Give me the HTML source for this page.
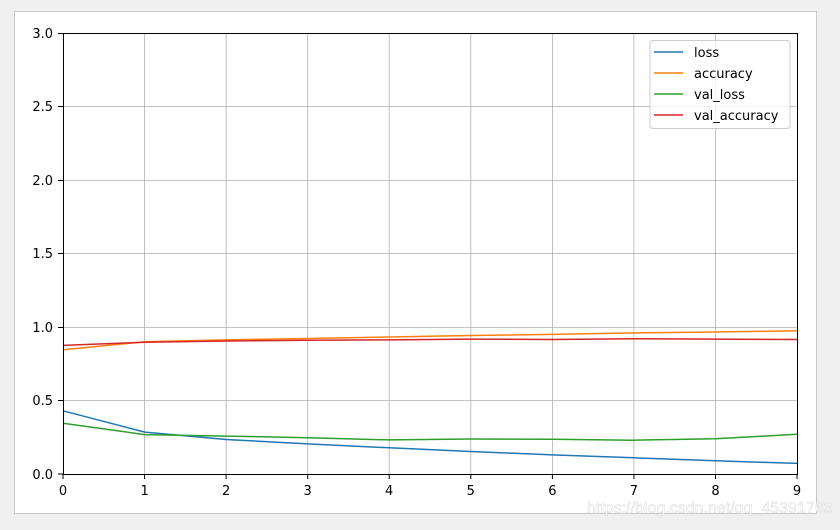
<!DOCTYPE html>
<html><head><style>body{margin:0;background:#f0f0f0;width:840px;height:525px;overflow:hidden}</style></head><body>
<svg width="840" height="525" xmlns="http://www.w3.org/2000/svg" font-family="DejaVu Sans, sans-serif" font-size="13">
<rect x="14.5" y="11.5" width="802" height="502" fill="#fff" stroke="#c8c8c8"/>
<g stroke="#b0b0b0" stroke-width="0.8">
<line x1="144.6" y1="33" x2="144.6" y2="474"/><line x1="226.1" y1="33" x2="226.1" y2="474"/><line x1="307.7" y1="33" x2="307.7" y2="474"/><line x1="389.2" y1="33" x2="389.2" y2="474"/><line x1="470.8" y1="33" x2="470.8" y2="474"/><line x1="552.4" y1="33" x2="552.4" y2="474"/><line x1="633.9" y1="33" x2="633.9" y2="474"/><line x1="715.5" y1="33" x2="715.5" y2="474"/>
<line x1="63" y1="400.5" x2="797" y2="400.5"/><line x1="63" y1="327.5" x2="797" y2="327.5"/><line x1="63" y1="253.5" x2="797" y2="253.5"/><line x1="63" y1="180.5" x2="797" y2="180.5"/><line x1="63" y1="106.5" x2="797" y2="106.5"/>
</g>
<g fill="none" stroke-width="1.5">
<polyline stroke="#1f77b4" points="63,410.8 144.6,432.1 226.1,439.5 307.7,443.9 389.2,447.8 470.8,451.5 552.4,454.9 633.9,457.8 715.5,460.8 797,463.4"/>
<polyline stroke="#ff7f0e" points="63,349.8 144.6,341.7 226.1,339.9 307.7,338.5 389.2,337 470.8,335.5 552.4,334.4 633.9,332.9 715.5,332 797,330.8"/>
<polyline stroke="#2ca02c" points="63,423.3 144.6,434.6 226.1,436.1 307.7,437.7 389.2,439.9 470.8,439 552.4,439.2 633.9,440.2 715.5,438.7 797,434.3"/>
<polyline stroke="#d62728" points="63,345.4 144.6,342.3 226.1,341 307.7,340.2 389.2,339.9 470.8,339.1 552.4,339.5 633.9,338.8 715.5,339.1 797,339.5"/>
</g>
<rect x="63.5" y="33.5" width="734" height="441" fill="none" stroke="#000" stroke-width="1"/>
<g stroke="#000"><line x1="63" y1="474" x2="63" y2="479"/><line x1="144.6" y1="474" x2="144.6" y2="479"/><line x1="226.1" y1="474" x2="226.1" y2="479"/><line x1="307.7" y1="474" x2="307.7" y2="479"/><line x1="389.2" y1="474" x2="389.2" y2="479"/><line x1="470.8" y1="474" x2="470.8" y2="479"/><line x1="552.4" y1="474" x2="552.4" y2="479"/><line x1="633.9" y1="474" x2="633.9" y2="479"/><line x1="715.5" y1="474" x2="715.5" y2="479"/><line x1="797" y1="474" x2="797" y2="479"/>
<line x1="58" y1="474" x2="63" y2="474"/><line x1="58" y1="400.5" x2="63" y2="400.5"/><line x1="58" y1="327.5" x2="63" y2="327.5"/><line x1="58" y1="253.5" x2="63" y2="253.5"/><line x1="58" y1="180.5" x2="63" y2="180.5"/><line x1="58" y1="106.5" x2="63" y2="106.5"/><line x1="58" y1="33.5" x2="63" y2="33.5"/></g>
<g text-anchor="middle"><text x="63" y="495">0</text><text x="144.6" y="495">1</text><text x="226.1" y="495">2</text><text x="307.7" y="495">3</text><text x="389.2" y="495">4</text><text x="470.8" y="495">5</text><text x="552.4" y="495">6</text><text x="633.9" y="495">7</text><text x="715.5" y="495">8</text><text x="797" y="495">9</text></g>
<g text-anchor="end"><text x="53" y="479">0.0</text><text x="53" y="405">0.5</text><text x="53" y="332">1.0</text><text x="53" y="258">1.5</text><text x="53" y="185">2.0</text><text x="53" y="111">2.5</text><text x="53" y="38">3.0</text></g>
<rect x="650" y="40.5" width="140" height="88" rx="3" fill="#fff" fill-opacity="0.8" stroke="#ccc"/>
<g stroke-width="1.5"><line x1="654" y1="52" x2="683" y2="52" stroke="#1f77b4"/><line x1="654" y1="73" x2="683" y2="73" stroke="#ff7f0e"/><line x1="654" y1="94" x2="683" y2="94" stroke="#2ca02c"/><line x1="654" y1="115" x2="683" y2="115" stroke="#d62728"/></g>
<text x="694" y="57">loss</text><text x="694" y="78">accuracy</text><text x="694" y="99">val_loss</text><text x="694" y="120">val_accuracy</text>
<text x="587" y="513" font-family="Liberation Sans, sans-serif" font-size="16" fill="#fff" stroke="#ddd" stroke-width="0.6" opacity="0.9">https://blog.csdn.net/qq_45391763</text>
</svg>
</body></html>
